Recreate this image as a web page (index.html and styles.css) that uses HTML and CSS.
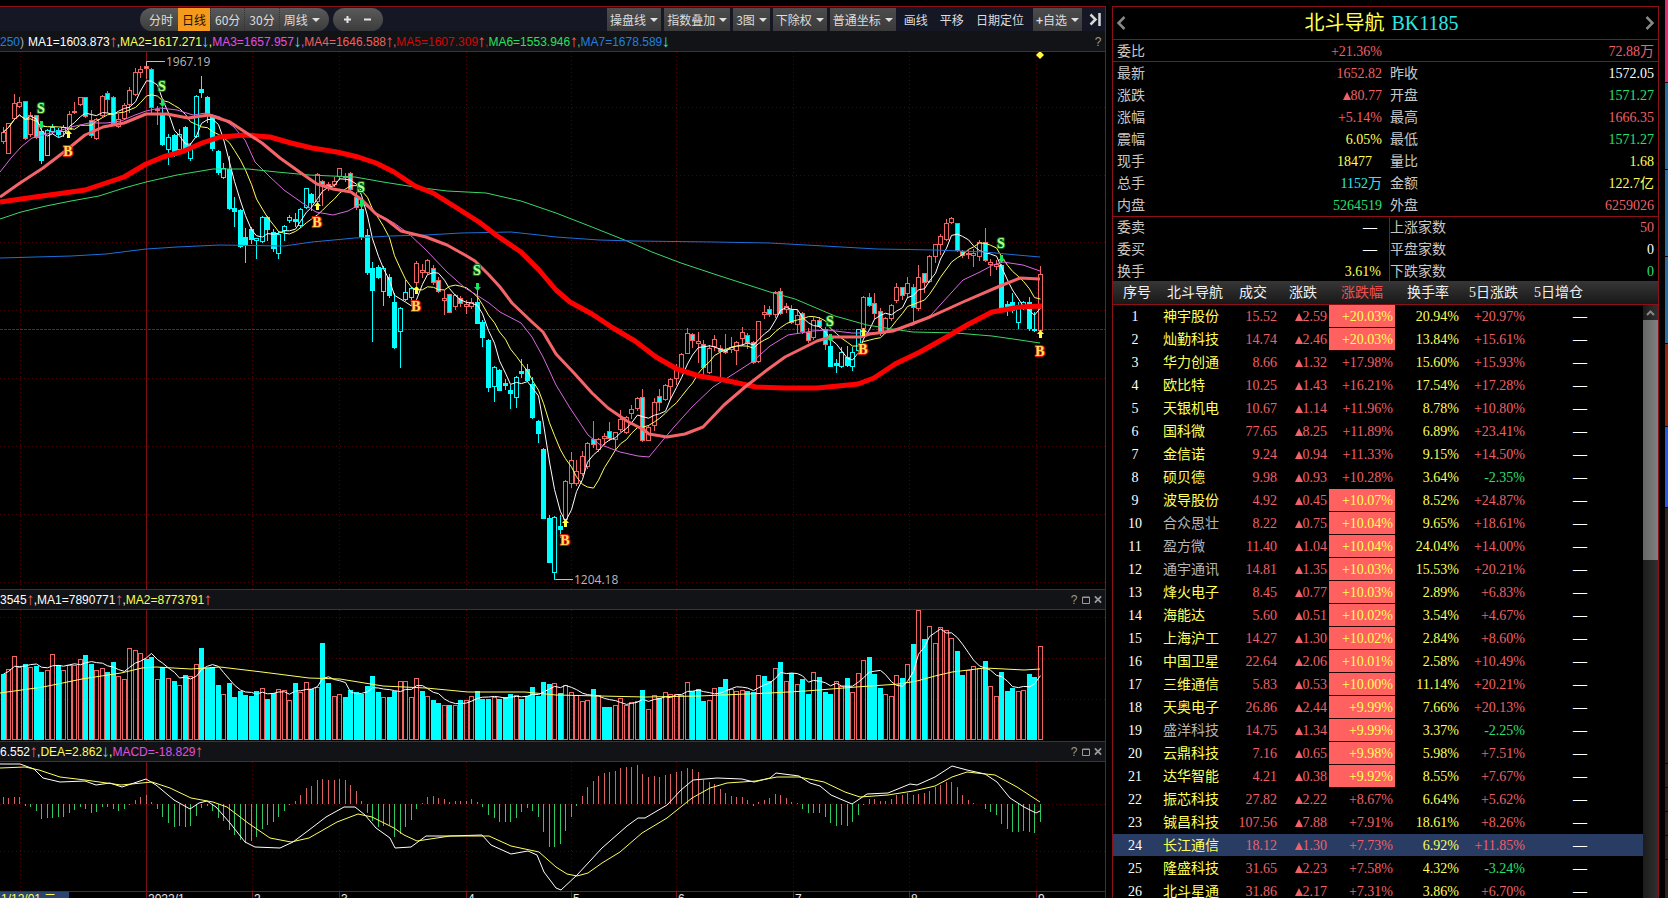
FILE: index.html
```html
<!DOCTYPE html>
<html lang="zh-CN">
<head>
<meta charset="utf-8">
<title>北斗导航 BK1185</title>
<link rel="stylesheet" href="styles.css">
</head>
<body>
<div class="app">
  <main class="charts">
    <div class="toolbar">
      <div class="pill periods">
        <button>分时</button><button class="active">日线</button><button>60分</button><button>30分</button><button>周线<i class="caret"></i></button>
      </div>
      <div class="pill zoom">
        <button aria-label="放大"><svg width="9" height="9" viewBox="0 0 9 9"><path d="M4.500 1v7M1 4.500h7" stroke="#e4e4e4" stroke-width="2"/></svg></button>
        <button aria-label="缩小"><svg width="9" height="9" viewBox="0 0 9 9"><path d="M1 4.500h7" stroke="#e4e4e4" stroke-width="2"/></svg></button>
      </div>
      <div class="tools">
        <button class="box">操盘线<i class="caret"></i></button>
        <button class="box">指数叠加<i class="caret"></i></button>
        <button class="box">3图<i class="caret"></i></button>
        <button class="box">下除权<i class="caret"></i></button>
        <button class="box">普通坐标<i class="caret"></i></button>
        <div class="links"><button>画线</button><button>平移</button><button>日期定位</button></div>
        <button class="box fav"><b>+</b>自选<i class="caret"></i></button>
        <button class="collapse" aria-label="收起"><svg width="13" height="13" viewBox="0 0 13 13"><path d="M1.500 1.500l5 5-5 5M10.500 0v13" fill="none" stroke="#d8d8d8" stroke-width="2.500"/></svg></button>
      </div>
    </div>
    <div class="info">
      <p><span class="ma7">250</span><span class="dim">)</span><span class="ma1 first">MA1=1603.873</span><i class="up">↑</i><span class="ma1">,</span><span class="ma2">MA2=1617.271</span><i class="down">↓</i><span class="ma2">,</span><span class="ma3">MA3=1657.957</span><i class="down">↓</i><span class="ma3">,</span><span class="ma4">MA4=1646.588</span><i class="up">↑</i><span class="ma4">,</span><span class="ma5">MA5=1607.309</span><i class="up">↑</i><span class="ma5">,</span><span class="ma6">MA6=1553.946</span><i class="up">↑</i><span class="ma6">,</span><span class="ma7">MA7=1678.589</span><i class="down">↓</i></p>
      <div class="ctl"><button>?</button></div>
    </div>
    <svg id="price" class="plot" viewBox="0 52 1105 537"></svg>
    <div class="info sub">
      <p><span class="ma1">3545</span><i class="up">↑</i><span class="ma1">,MA1=7890771</span><i class="up">↑</i><span class="ma1">,</span><span class="ma2">MA2=8773791</span><i class="up">↑</i></p>
      <div class="ctl"><button>?</button><button aria-label="最大化"><svg width="8" height="8" viewBox="0 0 8 8"><path d="M.5 1h7v6.500h-7zM.5 1.500h7" fill="none" stroke="#999"/></svg></button><button aria-label="关闭"><svg width="9" height="9" viewBox="0 0 9 9"><path d="M1 1l7 7M8 1l-7 7" stroke="#999" stroke-width="2"/></svg></button></div>
    </div>
    <svg id="volume" class="plot" viewBox="0 610 1105 131"></svg>
    <div class="info sub">
      <p><span class="ma1">6.552</span><i class="up">↑</i><span class="ma1">,</span><span class="ma2">DEA=2.862</span><i class="down">↓</i><span class="ma2">,</span><span class="ma3">MACD=-18.829</span><i class="up">↑</i></p>
      <div class="ctl"><button>?</button><button aria-label="最大化"><svg width="8" height="8" viewBox="0 0 8 8"><path d="M.5 1h7v6.500h-7zM.5 1.500h7" fill="none" stroke="#999"/></svg></button><button aria-label="关闭"><svg width="9" height="9" viewBox="0 0 9 9"><path d="M1 1l7 7M8 1l-7 7" stroke="#999" stroke-width="2"/></svg></button></div>
    </div>
    <svg id="macd" class="plot" viewBox="0 762 1105 129"></svg>
    <svg id="axis" class="plot axis" viewBox="0 892 1105 16"></svg>
  </main>

  <aside class="quote">
    <header class="title">
      <button aria-label="上一个"><svg width="10" height="14" viewBox="0 0 10 14"><path d="M8.500 1l-6 6 6 6" fill="none" stroke="#888" stroke-width="2.500"/></svg></button>
      <h1>北斗导航 <span>BK1185</span></h1>
      <button aria-label="下一个"><svg width="10" height="14" viewBox="0 0 10 14"><path d="M1.500 1l6 6-6 6" fill="none" stroke="#888" stroke-width="2.500"/></svg></button>
    </header>
    <dl class="facts head">
      <div><dt>委比</dt><dd class="r">+21.36%</dd></div><div><dt></dt><dd class="r">72.88万</dd></div>
    </dl>
    <dl class="facts main">
      <div><dt>最新</dt><dd class="r">1652.82</dd></div><div><dt>昨收</dt><dd class="w">1572.05</dd></div>
      <div><dt>涨跌</dt><dd class="r"><i class="tri"></i>80.77</dd></div><div><dt>开盘</dt><dd class="g">1571.27</dd></div>
      <div><dt>涨幅</dt><dd class="r">+5.14%</dd></div><div><dt>最高</dt><dd class="r">1666.35</dd></div>
      <div><dt>震幅</dt><dd class="y">6.05%</dd></div><div><dt>最低</dt><dd class="g">1571.27</dd></div>
      <div><dt>现手</dt><dd class="y inset">18477</dd></div><div><dt>量比</dt><dd class="y">1.68</dd></div>
      <div><dt>总手</dt><dd class="c">1152万</dd></div><div><dt>金额</dt><dd class="y">122.7亿</dd></div>
      <div><dt>内盘</dt><dd class="g">5264519</dd></div><div><dt>外盘</dt><dd class="r">6259026</dd></div>
    </dl>
    <dl class="facts split">
      <div><dt>委卖</dt><dd class="w none">—</dd></div><div><dt>上涨家数</dt><dd class="r">50</dd></div>
      <div><dt>委买</dt><dd class="w none">—</dd></div><div><dt>平盘家数</dt><dd class="w">0</dd></div>
      <div><dt>换手</dt><dd class="y">3.61%</dd></div><div><dt>下跌家数</dt><dd class="g">0</dd></div>
    </dl>
    <div class="list">
      <table>
        <colgroup><col class="c-no"><col class="c-name"><col class="c-num"><col class="c-num"><col class="c-pct"><col class="c-pct"><col class="c-pct"><col></colgroup>
        <thead><tr><th>序号</th><th>北斗导航</th><th>成交</th><th>涨跌</th><th class="sorted">涨跌幅</th><th>换手率</th><th>5日涨跌</th><th>5日增仓</th></tr></thead>
        <tbody id="rows"></tbody>
      </table>
      <div class="scroll"><div class="arrow"><svg width="9" height="6" viewBox="0 0 9 6"><path d="M1 5l3.500-3.500L8 5" fill="none" stroke="#888" stroke-width="2"/></svg></div><div class="thumb"></div></div>
    </div>
  </aside>

  <div class="edge"><i class="pink"></i><i class="blue"></i><i class="blue"></i><i class="blue"></i><i class="red"></i><i class="royal"></i><i class="brown tall"></i><i class="brown small"></i><i class="brown small"></i><i class="brown small"></i><i class="brown small"></i><i class="brown"></i></div>
</div>
<script src="app.js"></script>
</body>
</html>
```
FILE: styles.css
```css
* { box-sizing: border-box; margin: 0; padding: 0; }
html, body { height: 100%; overflow: hidden; background: #000; }
body { font: 12px/16px "Liberation Sans", "Noto Sans CJK SC", sans-serif; color: #ddd; }
button { font: inherit; color: inherit; background: none; border: 0; display: flex; align-items: center; justify-content: center; white-space: nowrap; }
i { font-style: normal; }
.app { display: grid; grid-template-columns: minmax(0, 1fr) 547px 3px; gap: 6px; height: 100%; align-items: stretch; overflow: hidden; }

/* left side: toolbar and charts */
.charts { margin-top: 6px; border-top: 1px solid #8c1016; border-right: 1px solid #8c1016; overflow: hidden; min-height: 0; }
.toolbar { display: flex; height: 24px; padding: 1px 3px 0 140px; background: #151824; font-family: "Noto Sans CJK SC", sans-serif; }
.pill { display: flex; height: 23px; border-radius: 12px; overflow: hidden; background: linear-gradient(#5a5a5a, #3c3c3c); }
.pill + .pill { margin-left: 4px; }
.periods { padding: 0 5px 0 4px; }
.periods button { padding: 0 5px; }
.periods button + button + button { border-left: 1px dotted #333; padding: 0 4px; }
.periods .active { background: #f49a1c; color: #201000; padding: 0 4px; }
.zoom { padding: 0 5px; }
.zoom button { width: 20px; }
.caret { width: 0; height: 0; border: 4px solid transparent; border-top-color: #e0e0e0; border-bottom: 0; margin-left: 4px; }
.tools { display: flex; gap: 3px; margin-left: auto; }
.box { padding: 0 3px; height: 23px; background: linear-gradient(#4c4c4c, #3a3a3c); }
.links { display: flex; gap: 12px; padding: 0 6px 0 5px; }
.collapse { margin-left: 4px; }
.info { display: flex; justify-content: space-between; align-items: center; height: 21px; padding-top: 1px; background: #121316; border-bottom: 1px solid #8c1016; white-space: nowrap; }
.sub { border-top: 1px solid #8c1016; padding-top: 0; }
.info p { display: flex; }
.info p i { width: 7px; display: flex; justify-content: center; font-size: 17px; }
.first { margin-left: 4px; }
.ctl { display: flex; gap: 4px; padding-right: 3px; color: #999; }
.ctl button { width: 8px; }
.plot { display: block; width: 100%; background: #000; }
.axis { border-top: 1px solid #8c1016; }
.ma1 { color: #fff; } .ma2 { color: #ffff50; } .ma3 { color: #e050e0; } .ma4 { color: #f06060; }
.ma5 { color: #d00808; } .ma6 { color: #28e060; } .ma7 { color: #2080e0; } .dim { color: #aaa; }
.up { color: #f06060; } .down { color: #20e8e8; }
.grid { stroke: #460609; stroke-dasharray: 1 3; }
.year { stroke: #7c1016; }
.last { stroke: #901018; stroke-dasharray: 3 1; }
.mark { font: bold 14px "Liberation Serif", serif; text-anchor: middle; paint-order: stroke; stroke-width: 2px; }
.mark-s { fill: #c0ff90; stroke: #087820; }
.mark-b { fill: #ffe060; stroke: #d81800; }
.peak { font: 12px "Open Sans", sans-serif; fill: #b8b8b8; }
.tick { font: 12px "Liberation Sans", sans-serif; fill: #e8e8e8; }
.tick-now { fill: #ffff50; }

/* right side: quote panel */
.quote { margin-top: 6px; border: 1px solid #8c1016; border-bottom: 0; display: flex; flex-direction: column; min-height: 0; overflow: hidden; font: 14px/22px "Liberation Serif", "Noto Sans CJK SC", serif; }
.title { display: flex; justify-content: space-between; align-items: center; height: 33px; flex: none; padding: 0 3px; border-bottom: 1px solid #8c1016; }
.title h1 { font-size: 20px; font-weight: 400; color: #ffff50; padding-right: 8px; }
.title span { color: #28e8e8; margin-left: 2px; }
.facts { display: grid; grid-template-columns: 277px 1fr; flex: none; border-bottom: 1px solid #8c1016; line-height: 24px; }
.facts div { display: flex; justify-content: space-between; height: 22px; padding: 0 4px 0 0; }
.facts div:nth-child(odd) { padding: 0 8px 0 4px; }
.head div { height: 21px; }
.main { margin-bottom: -1px; }
.split { border-bottom: 0; margin-bottom: -1px; }
.split div:nth-child(odd) { border-right: 1px solid #8c1016; }
.facts dt { color: #c8c8c8; }
.facts dd { white-space: nowrap; }
.tri { display: inline-block; border: 4px solid transparent; border-top: 0; border-bottom: 8px solid; }
.facts .inset { padding-right: 10px; }
.facts .none { padding-right: 4px; font-weight: bold; }
.r { color: #f06068; } .g { color: #28e070; } .y { color: #ffff58; } .c { color: #28e8e8; } .w { color: #fff; } .n { color: #b4b4b4; }
.list { position: relative; flex: 1; min-height: 0; overflow: hidden; padding-right: 15px; background: linear-gradient(#8c1016 1px, #353535 1px, #181818 23px, #8c1016 23px, #8c1016 24px, #000 24px); }
table { width: 100%; table-layout: fixed; border-collapse: separate; border-spacing: 0; }
.c-no { width: 46px; } .c-name { width: 70px; } .c-num { width: 50px; } .c-pct { width: 66px; }
th { height: 24px; font-weight: 400; line-height: 22px; color: #f0f0f0; text-align: right; padding: 1px 12px 1px 0; white-space: nowrap; }
th:nth-child(1) { text-align: left; padding-left: 10px; padding-right: 0; }
th:nth-child(2) { text-align: left; padding-left: 8px; padding-right: 0; }
th:nth-child(7) { padding-right: 9px; }
th:nth-child(8) { text-align: left; padding-left: 7px; }
th.sorted { color: #f05050; }
td { height: 23px; line-height: 23px; text-align: right; padding: 0 2px 0 0; white-space: nowrap; }
td:nth-child(1) { text-align: center; color: #fff; }
td:nth-child(2) { text-align: left; padding-left: 4px; }
td:nth-child(8) { text-align: left; padding-left: 46px; color: #fff; font-weight: bold; }
.hit { background: linear-gradient(#ff6060 22px, #200 22px); color: #ffff58; }
.selected { background: linear-gradient(#283c64 22px, #000 22px); }
.scroll { position: absolute; top: 24px; right: 0; bottom: 0; width: 15px; background: linear-gradient(90deg, #1c1c1c, #303030); }
.arrow { height: 15px; display: flex; align-items: center; justify-content: center; }
.thumb { height: 240px; background: linear-gradient(90deg, #666, #808080); }

.edge { display: flex; flex-direction: column; gap: 1px; background: #200; overflow: hidden; }
.edge i { flex: none; height: 82px; }
.edge .pink { background: #e82878; } .edge .blue { background: #2c6ea6; height: 86px; } .edge .red { background: #9a2412; }
.edge .royal { background: #2c58e8; height: 80px; } .edge .brown { background: #30241c; } .edge .tall { height: 255px; } .edge .small { height: 23px; }
```
FILE: app.js
```js
const X = i => Math.round(2.5 + 5.517 * i);
const el = (name, attrs, text) => {
  const n = document.createElementNS('http://www.w3.org/2000/svg', name);
  for (const k in attrs) n.setAttribute(k, attrs[k]);
  if (text) n.textContent = text;
  return n;
};
const price = document.getElementById('price');
const volume = document.getElementById('volume');
const macd = document.getElementById('macd');
const axis = document.getElementById('axis');
const RED = '#f06464', CYAN = '#00ffff';

// grid
const months = [20, 252, 339, 466, 571, 676, 793, 909, 1036];
function grid(svg, top, bottom, rows) {
  months.forEach(x => svg.append(el('path', { class: 'grid', d: `M${x + .5} ${top}V${bottom}` })));
  rows.forEach(y => svg.append(el('path', { class: 'grid', d: `M0 ${y + .5}H1105` })));
  svg.append(el('path', { class: 'year', d: `M146.5 ${top}V${bottom}` }));
}
grid(price, 52, 589, [107, 175, 242, 310, 378, 446, 514, 582]);
grid(volume, 610, 741, [617, 658, 699]);
grid(macd, 762, 891, [804, 851]);
price.append(el('path', { class: 'last', d: 'M0 329.5H1105' }));

function line(svg, pts, color, width = 1) {
  svg.append(el('polyline', { points: pts, fill: 'none', stroke: color, 'stroke-width': width, 'stroke-linejoin': 'round' }));
}

// candles: kind high top bottom low; R/C outline colour, F = filled
const candles = `R 127 132 141 143|R 123 123 153 153|R 94 103 118 119|R 97 102 106 107|RF 101 101 138 139|R 112 115 134 136|RF 115 115 137 138|CF 125 131 160 163|C 129 130 155 155|C 124 127 131 133|CF 128 130 134 136|C 125 127 131 136|R 111 114 129 129|R 102 111 112 113|R 97 97 104 105|RF 97 97 116 117|RF 110 120 135 137|R 118 119 138 139|R 95 96 115 116|RF 91 93 99 112|RF 96 97 123 124|R 114 119 126 127|R 103 105 118 119|R 87 90 104 112|R 68 72 94 95|R 66 69 72 77|RF 62 66 68 78|RF 68 69 107 112|R 106 109 110 124|CF 107 113 144 145|C 134 137 149 164|CF 134 135 155 156|C 129 134 149 150|CF 126 127 150 151|C 143 145 158 160|C 95 96 136 137|CF 76 89 92 97|CF 96 97 115 122|CF 115 117 148 150|CF 150 151 172 174|C 163 168 177 178|CF 156 169 208 209|CF 197 208 211 226|CF 209 210 246 247|CF 228 237 245 262|CF 227 229 239 243|C 238 238 240 258|C 216 217 241 242|CF 216 217 229 240|CF 229 232 248 251|C 231 234 253 258|C 225 226 230 240|C 215 217 220 222|CF 213 219 221 226|C 208 209 225 227|C 188 188 207 208|CF 193 194 202 210|R 173 174 201 203|RF 180 181 184 205|RF 182 184 187 190|R 177 181 184 186|R 168 168 176 179|R 173 176 177 181|RF 172 173 189 191|RF 192 197 207 209|CF 203 209 236 239|CF 229 235 272 274|CF 262 268 290 341|CF 265 267 277 278|C 266 268 291 305|CF 274 277 295 297|CF 293 302 347 348|C 307 308 331 367|C 280 292 299 300|C 287 288 297 304|R 261 263 282 285|R 264 270 272 277|R 259 260 272 273|RF 265 268 282 284|RF 277 280 291 292|R 290 298 300 314|RF 294 294 312 312|R 294 295 306 309|RF 296 298 303 306|R 300 304 306 313|R 298 302 306 308|CF 287 302 323 323|CF 320 322 337 346|CF 339 340 387 391|C 366 367 386 401|CF 369 370 390 390|CF 379 383 385 389|CF 385 390 393 408|C 376 377 397 407|CF 359 371 373 377|CF 364 369 380 381|CF 377 384 417 418|CF 420 421 433 442|CF 448 449 518 518|CF 515 518 562 562|C 516 517 572 579|CF 515 526 529 537|R 480 481 519 519|R 452 460 483 487|R 460 471 483 485|R 451 456 473 475|R 442 443 466 468|RF 421 439 444 447|R 438 439 449 451|R 433 436 438 444|RF 422 431 438 440|R 432 432 439 450|R 410 419 429 431|R 416 417 432 433|R 405 409 413 418|R 397 398 408 410|RF 389 397 440 441|R 425 427 440 440|R 398 402 425 430|RF 389 396 402 410|R 384 385 399 400|R 378 379 386 398|R 364 369 378 384|R 353 354 371 372|R 328 333 353 353|RF 333 334 340 347|R 332 341 343 362|RF 340 344 367 374|R 345 348 372 373|R 335 339 346 350|RF 345 348 351 379|RF 334 349 352 353|R 337 347 349 352|R 341 342 350 364|R 327 332 338 345|RF 333 335 342 348|RF 341 342 362 363|R 321 321 361 362|R 305 312 314 318|RF 306 309 314 316|R 291 292 314 317|RF 288 291 313 314|R 303 306 309 312|RF 305 309 322 323|R 310 315 324 332|RF 312 313 331 333|RF 328 332 340 342|R 317 320 337 339|RF 317 320 326 327|RF 327 329 344 349|CF 340 346 366 366|CF 359 363 365 372|C 347 352 366 367|CF 346 357 365 366|C 347 352 366 370|C 329 329 350 350|R 296 297 328 329|RF 293 297 305 306|RF 293 303 313 318|RF 308 311 333 335|R 317 318 332 333|R 304 305 318 320|R 283 287 300 302|RF 287 287 295 299|R 277 283 293 297|RF 284 287 307 321|R 265 277 308 310|RF 273 273 282 292|R 255 256 281 282|R 244 244 256 262|R 234 236 244 254|R 219 223 239 240|R 217 218 222 223|RF 223 223 250 251|RF 250 251 255 257|R 250 253 254 258|R 249 253 255 266|R 240 242 256 260|RF 228 242 260 261|R 259 262 264 275|R 260 264 266 269|CF 264 265 308 309|CF 301 304 306 315|CF 293 302 310 312|C 302 307 322 328|C 301 302 306 309|CF 297 302 328 330|C 312 329 330 331|R 266 274 330 330`
  .split('|').map(s => { const [k, ...v] = s.split(' '); return [k, ...v.map(Number)]; });
candles.forEach(([k, hi, top, bot, lo], i) => {
  const x = X(i), color = k[0] === 'R' ? RED : CYAN;
  price.append(el('path', { d: `M${x + .5} ${hi}V${top}M${x + .5} ${bot}V${lo + 1}`, stroke: color }));
  price.append(el('rect', { x: x - 1.5, y: top + .5, width: 4, height: Math.max(bot - top, 1), stroke: color, fill: k[1] ? CYAN : 'none' }));
});

// moving averages of the close
function average(values, n) {
  return values.map((_, i) => {
    const part = values.slice(Math.max(0, i - n + 1), i + 1);
    return `${X(i) + .5},${(part.reduce((a, b) => a + b) / part.length).toFixed(1)}`;
  }).join(' ');
}
const closes = candles.map(c => c[0][1] ? c[3] : c[2]);
line(price, average(closes, 5), '#fff');
line(price, average(closes, 10), '#ffff60');
line(price, '0,172 11,158 21,147 32,138 43,135 59,131 71,127 89,123 106,123 121,121 135,115 146,111 160,108 177,110 193,115 206,113 220,117 234,127 245,140 255,162 270,177 284,190 301,202 316,212 333,215 348,211 362,203 376,213 394,223 408,233 426,250 447,272 465,288 475,294 489,303 500,312 521,323 532,337 543,357 556,385 570,408 588,435 599,444 620,452 638,456 649,457 663,440 674,427 692,407 713,387 735,373 752,362 770,346 788,335 813,331 827,330 852,333 877,333 913,325 931,315 952,292 963,280 980,272 993,265 1003,262 1023,265 1040,271', '#d868e0');
line(price, '0,219 21,212 46,206 71,201 99,196 124,188 146,182 177,175 213,169 248,169 277,172 309,175 355,177 383,182 415,187 447,191 486,193 521,201 556,213 592,227 627,241 652,252 681,263 717,275 770,292 795,299 835,316 867,325 892,329 913,332 956,333 992,336 1013,339 1040,343', '#38d868');
line(price, '0,258 71,256 106,254 146,249 177,247 220,245 284,246 312,242 355,238 390,236 426,235 461,233 511,232 539,235 556,237 599,240 635,241 713,242 770,243 824,246 877,249 935,250 985,252 1017,255 1040,257', '#1c70d8');
line(price, '0,202 35,197 64,193 85,190 106,183 124,177 146,164 163,157 184,151 202,143 220,137 245,135 270,137 291,143 312,148 337,152 358,157 376,163 394,172 415,186 433,193 457,208 479,222 496,235 521,252 539,270 556,290 570,302 592,314 613,328 635,341 656,357 677,369 699,376 724,380 756,387 785,388 817,388 838,386 858,384 874,378 895,364 920,352 945,338 967,325 992,312 1020,307 1042,306', '#ff0000', 5);
line(price, '0,197 20,183 43,168 64,152 85,135 103,127 124,123 146,114 167,114 188,118 209,115 230,122 245,132 262,143 280,158 301,173 317,184 333,189 351,192 362,200 376,214 387,220 401,231 426,237 447,245 465,255 475,261 489,275 500,287 512,303 532,322 543,332 556,354 574,373 592,393 608,408 627,421 644,430 649,434 667,437 685,434 703,427 724,405 745,387 767,370 785,357 799,350 817,341 831,337 860,337 870,334 893,331 930,317 963,302 1000,286 1020,278 1040,279', '#f46468', 3);

// buy and sell marks: letter, x, letter baseline, arrow centre
[['S', 41, 113, 125], ['S', 162, 91, 103], ['S', 361, 192, 204], ['S', 477, 275, 287], ['S', 830, 326, 338], ['S', 1001, 248, 259],
 ['B', 68, 156, 134], ['B', 317, 227, 206], ['B', 416, 311, 290], ['B', 565, 545, 523], ['B', 863, 354, 332], ['B', 1040, 356, 334]
].forEach(([t, x, y, a]) => {
  const d = t === 'S' ? `M${x - 1} ${a - 4}h3v4h2l-3.500 4-3.500-4h2z` : `M${x - 1} ${a + 4}h3v-4h2l-3.500-4-3.500 4h2z`;
  price.append(el('path', { d, fill: t === 'S' ? '#10e860' : '#ffff40' }));
  price.append(el('text', { class: 'mark mark-' + t.toLowerCase(), x, y }, t));
});
price.append(el('path', { d: 'M1040 51l4 4-4 4-4-4z', fill: '#ffff40' }));
price.append(el('path', { d: 'M146.500 66V61.500H165M555.500 580V579.500H573', fill: 'none', stroke: '#c0c0c0' }));
price.append(el('text', { class: 'peak', x: 166, y: 66 }, '1967.19'));
price.append(el('text', { class: 'peak', x: 574, y: 584 }, '1204.18'));

// volume: colour and bar top, in thirds of a pixel below y = 590
const vol = 'c252 r238 r199 r232 c222 r232 c228 c246 r240 r193 c226 r240 r224 r224 r208 c195 c222 r240 r235 c246 c216 r259 r268 r175 r181 r190 c207 c202 r268 c230 r265 c273 r286 c255 r259 r223 c174 c235 c232 c285 r313 c280 c321 c304 c316 c318 c303 r295 c327 c310 r298 r300 r331 c280 r306 r277 c298 r292 c159 c280 r319 r313 c321 c300 c306 c312 c288 c258 c306 r321 c321 c303 r274 r274 r322 r265 c303 r319 c330 c339 r346 c345 r346 c330 r331 r319 c304 c327 c327 r322 c327 c321 c312 r316 c327 c318 c291 c318 c276 c282 r280 c309 r286 r307 r316 r334 r331 c297 r316 c351 c351 r346 r325 r346 r337 r334 c300 r358 r316 c325 r307 r313 r313 r316 r277 c303 c297 c333 r331 r295 c291 c267 r298 r304 r301 c303 c306 r256 c258 c273 r235 c216 r273 c250 r283 c267 c312 r247 c261 c306 c312 r273 r288 c264 r307 r250 r211 c201 c252 c294 r313 r319 r256 c264 r223 c162 r61 c147 r109 r160 r112 r121 r145 c183 c255 r241 r229 r235 c213 r289 r319 c246 c303 c294 r304 r301 c252 c261 r169'
  .split(' ').map(s => [s[0], 590 + Math.round(s.slice(1) / 3)]);
vol.forEach(([k, y], i) => {
  const x = X(i);
  if (k === 'c') volume.append(el('rect', { x: x - 2, y, width: 5, height: 740 - y, fill: CYAN }));
  else volume.append(el('rect', { x: x - 1.5, y: y + .5, width: 4, height: 739 - y, fill: 'none', stroke: RED }));
});
line(volume, average(vol.map(v => v[1]), 5), '#fff');
line(volume, '0,693 43,687 82,679 121,673 142,668 156,667 191,669 220,667 262,672 309,678 340,679 383,686 426,688 468,692 525,692 556,695 645,697 699,696 770,693 806,691 856,687 899,684 917,681 935,676 952,672 985,668 1024,670 1040,669', '#ffff60');

// MACD histogram, in thirds of a pixel around y = 804
'22 18 22 20 -5 -8 -22 -46 -42 -42 -40 -38 -28 -18 -8 -14 -26 -25 -10 -8 -16 -22 -16 -4 12 22 28 6 -14 -40 -56 -70 -66 -70 -65 -35 -12 -5 -22 -42 -52 -78 -92 -108 -118 -112 -98 -75 -62 -55 -40 -20 -4 10 28 48 55 73 76 73 73 76 73 58 38 8 -28 -50 -68 -65 -62 -98 -90 -70 -48 -16 3 22 24 18 16 6 10 10 10 16 6 -8 -32 -42 -54 -54 -55 -42 -25 -12 -22 -38 -85 -130 -128 -120 -82 -38 -6 24 50 70 84 92 97 98 108 112 112 118 90 80 84 80 88 90 97 100 108 104 97 72 66 60 44 32 24 20 21 12 -6 6 13 18 30 26 18 6 3 -14 -28 -26 -28 -40 -58 -65 -62 -65 -55 -34 -4 14 15 8 10 16 26 26 32 26 30 33 40 50 58 66 66 50 28 12 4 1 -14 -24 -34 -60 -75 -84 -84 -80 -84 -88 -54'
  .split(' ').map(Number).forEach((v, i) => {
    macd.append(el('path', { d: `M${X(i) + .5} 804V${Math.round(804 - v / 3)}`, stroke: v > 0 ? '#d86060' : '#30c860' }));
  });
line(macd, '0,764 20,764 34,769 43,778 60,782 85,781 96,785 110,783 122,787 146,779 156,785 174,800 190,809 199,803 207,801 216,807 230,823 245,842 255,847 280,848 293,842 309,830 326,817 344,807 355,807 365,815 376,828 390,838 395,848 411,847 426,836 450,836 482,835 491,845 511,854 528,851 537,855 544,872 556,888 561,890 577,875 602,848 627,826 638,818 645,818 667,805 681,790 693,780 717,778 742,779 754,782 770,778 776,773 799,776 810,783 820,786 831,795 852,804 867,794 888,793 910,784 917,785 935,777 952,766 967,770 985,774 997,782 1010,798 1024,807 1036,813 1040,811', '#fff');
line(macd, '0,768 25,767 39,770 60,777 85,780 121,785 152,782 170,788 191,798 213,802 227,807 248,823 270,838 291,842 309,838 337,822 358,814 372,817 394,828 404,835 417,841 450,836 489,836 511,846 539,852 556,867 567,874 577,876 588,873 602,863 620,852 642,833 667,818 692,798 710,788 727,783 756,781 777,777 799,777 824,782 845,792 860,797 888,795 913,791 935,786 952,777 967,772 995,775 1017,787 1040,802', '#ffff60');

// time axis
axis.append(el('rect', { x: 0, y: 892, width: 69, height: 16, fill: '#2c4470' }));
axis.append(el('text', { class: 'tick tick-now', x: 1, y: 903 }, '1/12/01 二'));
[['2022/1', 146], ['2', 252], ['3', 339], ['4', 466], ['5', 571], ['6', 676], ['7', 793], ['8', 909], ['9', 1036]].forEach(([t, x]) => {
  axis.append(el('path', { class: 'year', d: `M${x + .5} 892V908` }));
  axis.append(el('text', { class: 'tick', x: x + 2, y: 903 }, t));
});

// constituents: name, price, change, change %, turnover, 5-day change
const grey = [10, 11, 12, 19];
`神宇股份 15.52 2.59 +20.03 20.94 +20.97|灿勤科技 14.74 2.46 +20.03 13.84 +15.61|华力创通 8.66 1.32 +17.98 15.60 +15.93|欧比特 10.25 1.43 +16.21 17.54 +17.28|天银机电 10.67 1.14 +11.96 8.78 +10.80|国科微 77.65 8.25 +11.89 6.89 +23.41|金信诺 9.24 0.94 +11.33 9.15 +14.50|硕贝德 9.98 0.93 +10.28 3.64 -2.35|波导股份 4.92 0.45 +10.07 8.52 +24.87|合众思壮 8.22 0.75 +10.04 9.65 +18.61|盈方微 11.40 1.04 +10.04 24.04 +14.00|通宇通讯 14.81 1.35 +10.03 15.53 +20.21|烽火电子 8.45 0.77 +10.03 2.89 +6.83|海能达 5.60 0.51 +10.02 3.54 +4.67|上海沪工 14.27 1.30 +10.02 2.84 +8.60|中国卫星 22.64 2.06 +10.01 2.58 +10.49|三维通信 5.83 0.53 +10.00 11.14 +20.21|天奥电子 26.86 2.44 +9.99 7.66 +20.13|盛洋科技 14.75 1.34 +9.99 3.37 -2.25|云鼎科技 7.16 0.65 +9.98 5.98 +7.51|达华智能 4.21 0.38 +9.92 8.55 +7.67|振芯科技 27.82 2.22 +8.67 6.64 +5.62|铖昌科技 107.56 7.88 +7.91 18.61 +8.26|长江通信 18.12 1.30 +7.73 6.92 +11.85|隆盛科技 31.65 2.23 +7.58 4.32 -3.24|北斗星通 31.86 2.17 +7.31 3.86 +6.70`
  .split('|').forEach((s, i) => {
    const [name, last, chg, pct, turn, five] = s.split(' ');
    const no = i + 1, hit = no <= 2 || (no >= 9 && no <= 21);
    const tr = document.createElement('tr');
    if (no === 24) tr.className = 'selected';
    tr.innerHTML = `<td>${no}</td><td class="${grey.includes(no) ? 'n' : 'y'}">${name}</td><td class="r">${last}</td><td class="r"><i class="tri"></i>${chg}</td><td class="${hit ? 'hit' : 'r'}">${pct}%</td><td class="y">${turn}%</td><td class="${five[0] === '-' ? 'g' : 'r'}">${five}%</td><td>—</td>`;
    document.getElementById('rows').append(tr);
  });
```
